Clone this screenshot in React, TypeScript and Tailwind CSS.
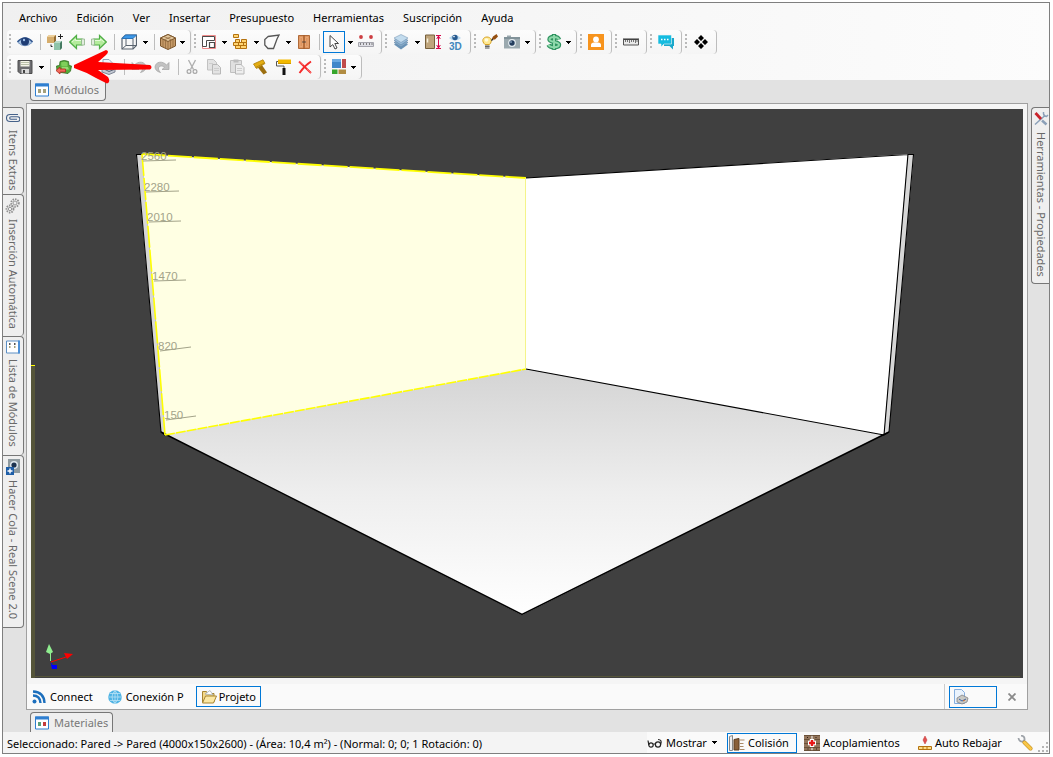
import React from "react";

type IconProps = { children: React.ReactNode; className?: string; box?: string };

function Icon({ children, className = "size-4", box = "0 0 16 16" }: IconProps) {
  return (
    <svg viewBox={box} className={`${className} shrink-0`} fill="none" aria-hidden="true">
      {children}
    </svg>
  );
}

function Caret() {
  return (
    <svg viewBox="0 0 5 3" className="h-[3px] w-[5px] shrink-0" shapeRendering="crispEdges" aria-hidden="true">
      <path d="M0 0h5v1h-1v1h-1v1h-1v-1h-1v-1h-1z" fill="#000" />
    </svg>
  );
}

/* ---------- toolbar icons ---------- */

const EyeIcon = () => (
  <Icon>
    <path d="M0 8Q8 -1 16 8Q8 16 0 8Z" fill="#a9c4e2" />
    <path d="M0.5 8Q8 0 15.5 8" stroke="#33578f" strokeWidth="1.6" />
    <path d="M1 8.500Q8 15 15 8.500" stroke="#7f9cc4" />
    <circle cx="8" cy="7.500" r="4" fill="#1e3c74" />
    <circle cx="7" cy="6" r="1.200" fill="#9fc0ea" />
  </Icon>
);
const BoxesIcon = () => (
  <Icon>
    <path d="M0 3l2-2h7v6l-2 2H0z" fill="#d6ad6c" />
    <path d="M0 3l2-2h7L7 3z" fill="#edd09c" />
    <path d="M7 3l2-2v6l-2 2z" fill="#936b32" />
    <path d="M7 9l2-2h6v7l-2 2H7z" fill="#8fc4aa" />
    <path d="M7 9l2-2h6l-2 2z" fill="#b9dccb" />
    <path d="M13 9l2-2v7l-2 2z" fill="#457a62" />
    <path d="M13.500 0v5M11 2.500h5M4 10.500v2h1.500" stroke="#222" />
  </Icon>
);
const ArrowGreen = ({ flip = false }: { flip?: boolean }) => (
  <Icon>
    <g transform={flip ? "matrix(-1 0 0 1 16 0)" : undefined}>
      <path d="M.7 8L7.500 1.500V5H13v6H7.500v3.500z" fill="#b4ec9c" stroke="#4fae45" strokeWidth="1.200" />
      <path d="M3 8l3.500-3v1.500H12" stroke="#e4fbd9" />
      <path d="M12.500 5h3v6h-3z" fill="#e3ecdf" stroke="#8fb58a" strokeWidth=".8" />
    </g>
  </Icon>
);
const IsoBoxIcon = () => (
  <Icon>
    <path d="M1 4.500L4.500 1H15.500V11.500L12 15H1z" fill="#f7f7f7" stroke="#59636e" strokeWidth="1.200" />
    <path d="M1 4.500L4.500 1H15.500L12 4.500z" fill="#3c98e8" stroke="#2a75bd" />
    <path d="M12 4.500V15M5 4.500V11.500H15M5 11.500L1 15" stroke="#59636e" />
  </Icon>
);
const CrateIcon = () => (
  <Icon>
    <path d="M0.500 4L8 0.500L15.500 4V12L8 15.500L0.500 12z" fill="#c69a68" stroke="#7c572e" />
    <path d="M0.500 4L8 0.500L15.500 4L8 7.500z" fill="#e4c89e" stroke="#7c572e" />
    <path d="M8 7.500V15.500M3 5.500v7.500M5.500 6.500v8M10.500 6.500v8M13 5.500v7.500M4 2.500l7.500 3.300M11.500 2.500L4 6" stroke="#8b6438" strokeWidth=".7" />
  </Icon>
);
const WallIcon = () => (
  <Icon>
    <path d="M1.500 1.500H14.500V14.500H1.500z" fill="#fff" stroke="#f08a8a" />
    <path d="M1.500 12.500V2.500H13.500V6.500H5.500V12.500z" stroke="#4a4a4a" />
    <path d="M8.500 8.500h5v5h-5z" stroke="#4a4a4a" strokeWidth="1.200" />
  </Icon>
);
const BricksIcon = () => (
  <Icon>
    <path d="M1.500 .5h5v3h-5zM3.500 5.500h4v3h-4zM9.500 5.500h5v3h-5zM1.500 8.500h5v3h-5zM6.500 8.500h5v3h-5zM11.500 8.500h3v3h-3zM3.500 11.500h5v3h-5zM8.500 11.500h6v3h-6z" fill="#ffd573" stroke="#b4720f" />
  </Icon>
);
const ShapeIcon = () => (
  <Icon>
    <path d="M4 2.500L15 1L13 5L9.500 14.500H4L.8 11V5.500z" fill="#fbfbfb" stroke="#555" strokeWidth="1.300" />
  </Icon>
);
const CabinetIcon = () => (
  <Icon>
    <path d="M2.500 1.500h11v13h-11z" fill="#dd9560" stroke="#b06a38" />
    <path d="M8 1.500v13" stroke="#914917" />
    <path d="M4 3.500h2.500v9H4zM9.500 3.500H12v9H9.500z" stroke="#ecae7d" strokeWidth=".7" />
    <path d="M6.500 8h1M8.500 8h1" stroke="#333" strokeWidth="1.500" />
  </Icon>
);
const PointerIcon = () => (
  <Icon>
    <path d="M4 1.500L12.500 9.500H8.800L11 14L9 15L6.800 10.600L4 13z" fill="#fff" stroke="#444" />
  </Icon>
);
const MeasureIcon = () => (
  <Icon>
    <circle cx="3" cy="3" r="1.900" fill="#cd3e42" />
    <circle cx="13" cy="3" r="1.900" fill="#cd3e42" />
    <path d="M.5 8.500h15v4H.5z" fill="#dedee4" stroke="#a5a5ad" />
    <path d="M2.500 9v2M5.500 9v2M8.500 9v2M11.500 9v2M14 9v2" stroke="#666" strokeWidth=".8" />
  </Icon>
);
const LayersIcon = () => (
  <Icon>
    <path d="M1 10.500L8 7l7 3.500L8 15.500z" fill="#6b94b8" />
    <path d="M1 8.500L8 5l7 3.500L8 13z" fill="#86abc9" stroke="#6587a8" strokeWidth=".6" />
    <path d="M1 6.300L8 3l7 3.300L8 11z" fill="#98bbd8" stroke="#6587a8" strokeWidth=".6" />
    <path d="M1 4L8 .5L15 4L8 8.500z" fill="#c3dcee" stroke="#7c9bb9" strokeWidth=".6" />
  </Icon>
);
const DoorIcon = () => (
  <Icon>
    <path d="M.5 1h9v13.500h-9z" fill="#bfa57c" stroke="#77603c" />
    <path d="M2.500 4.500v4" stroke="#f6f0df" strokeWidth="1.500" />
    <path d="M11 1.500h5M11 14.500h5M13.500 2v12M11.700 5l1.800-3 1.800 3M11.700 11l1.800 3 1.800-3" stroke="#d9084c" />
  </Icon>
);
const Eye3DIcon = () => (
  <Icon>
    <path d="M2 4Q8 -2 14 4Q8 9 2 4Z" fill="#b9d8ef" />
    <circle cx="8" cy="3.500" r="2.700" fill="#26598f" />
    <circle cx="7" cy="2.600" r=".8" fill="#fff" />
    <text x="2" y="15.500" fontFamily="Liberation Sans, sans-serif" fontSize="10" fontWeight="700" fill="#4187bd">3D</text>
  </Icon>
);
const BulbIcon = () => (
  <Icon>
    <path d="M3 10.500C-1 7 1 3 5 3s6 4 2.500 7.500z" fill="#ffe890" stroke="#d7a224" />
    <circle cx="4.500" cy="6" r="1.800" fill="#fffce0" />
    <path d="M3 11h4.500v4H3z" fill="#a3a3a3" />
    <path d="M3 12.500h4.500" stroke="#666" />
    <path d="M9.500 5.500L11 2.500L14.500 0L16 2.500L13 5.500z" fill="#965011" />
    <path d="M9 7l1-2.500L11.500 6z" fill="#222" />
  </Icon>
);
const CameraIcon = () => (
  <Icon>
    <path d="M0 3h3V1.500h4V3h9v11.500H0z" fill="#9ba9af" />
    <path d="M0 3h16v2H0z" fill="#819299" />
    <circle cx="8" cy="9" r="3.900" fill="#e6eef2" />
    <circle cx="8" cy="9" r="2.700" fill="#243d5d" />
    <circle cx="7" cy="8" r=".8" fill="#b8d4ec" />
  </Icon>
);
const DollarIcon = () => (
  <Icon>
    <path d="M13 5.500C12 2 3.500 2 3.500 5.500C3.500 8.500 13 7.500 13 10.800C13 14 4 14 2.500 10.800M8 0v16" stroke="#2f9460" strokeWidth="4.400" />
    <path d="M13 5.500C12 2 3.500 2 3.500 5.500C3.500 8.500 13 7.500 13 10.800C13 14 4 14 2.500 10.800M8 1v14" stroke="#8fd9ab" strokeWidth="2" />
  </Icon>
);
const PersonIcon = () => (
  <Icon>
    <path d="M0 0h16v16H0z" fill="#f7941e" />
    <circle cx="8" cy="5.500" r="2.900" fill="#fff" />
    <path d="M3 13V11Q3 8.500 6 8.500h4Q13 8.500 13 11v2z" fill="#fff" />
  </Icon>
);
const RulerIcon = () => (
  <Icon>
    <path d="M.5 5.500h15v5.500H.5z" fill="#e9e9e9" stroke="#555" />
    <path d="M0 5h16" stroke="#333" />
    <path d="M2.500 6v2M4.500 6v2M6.500 6v3M8.500 6v2M10.500 6v2M12.500 6v3M14 6v2" stroke="#555" strokeWidth=".8" />
  </Icon>
);
const ChatIcon = () => (
  <Icon>
    <path d="M6 4h10v8h-1v3.500L11.500 12H6z" fill="#1aa8cb" />
    <path d="M0 1h13.500v9H6l-3 3v-3H0z" fill="#15bce0" stroke="#f7f7f7" strokeWidth=".6" />
    <path d="M3 5.500h1.500M6 5.500h1.500M9 5.500h1.500" stroke="#fff" strokeWidth="1.500" />
  </Icon>
);
const DiamondsIcon = () => (
  <Icon>
    <path d="M8 1l3 3-3 3-3-3zM8 9l3 3-3 3-3-3zM4 5l3 3-3 3-3-3zM12 5l3 3-3 3-3-3z" fill="#000" />
  </Icon>
);
const SaveIcon = () => (
  <Icon>
    <path d="M1 1.500h14v13H3l-2-2z" fill="#6d6d70" stroke="#4c4c4c" />
    <path d="M3.500 2h9v5.500h-9z" fill="#f4f4e8" />
    <path d="M4 3.500h8M4 5.500h8" stroke="#b9bfa8" />
    <path d="M4.500 10h7.500v4.500H4.500z" fill="#d9d9d9" />
    <path d="M6 11h2v3H6z" fill="#444" />
  </Icon>
);
const SofaIcon = () => (
  <Icon>
    <path d="M3.500 6.500L4 2.500Q8 .5 12.500 2.500L13 6.500L15.500 7L14.500 12L12 14.500L5 13.500L1 11.500L.5 7z" fill="#55aa38" stroke="#2f6f20" strokeWidth=".8" />
    <path d="M5 3.500Q8 2 11.500 3.500v4H5.500z" fill="#7fcf5a" />
    <path d="M5.500 8h6.500l1 2.500H6.500z" fill="#94dc70" />
    <path d="M0 11.500L4 8v2h5.500v3H4v2z" fill="#f2695a" stroke="#ae2a20" strokeWidth=".8" />
  </Icon>
);
const BrownToolIcon = () => (
  <Icon>
    <path d="M4 3l7 2 2 7-5 1-4-3z" fill="#b28b86" />
  </Icon>
);
const PrinterIcon = () => (
  <Icon>
    <path d="M3 .5h6l3 3v4H3z" fill="#eef4fb" stroke="#93a8bf" />
    <path d="M2 9l10-2 3 3v3l-6 2.500L2 13z" fill="#c3c9d3" stroke="#7c8493" />
    <path d="M5 10.500l4 2 5-2" stroke="#596274" />
  </Icon>
);
const ArcIcon = ({ flip = false }: { flip?: boolean }) => (
  <Icon>
    <g transform={flip ? "matrix(-1 0 0 1 16 0)" : undefined}>
      <path d="M1 3.500v7h7L5.500 8.300C8 6 12 7 11.500 10c-.2 1.500-1 2.500-2 3.500 3.500-.8 5.500-3 5.500-5.500C14.500 2.500 7.500 1.500 3.500 6z" fill="#c2c2c2" stroke="#a2a2a2" strokeWidth=".7" />
    </g>
  </Icon>
);
const CutIcon = () => (
  <Icon>
    <path d="M4.500 1l5 9.500M11.500 1l-5 9.500" stroke="#b0b0b0" strokeWidth="1.400" />
    <circle cx="5" cy="12.500" r="1.900" stroke="#a6a6a6" strokeWidth="1.200" />
    <circle cx="11" cy="12.500" r="1.900" stroke="#a6a6a6" strokeWidth="1.200" />
  </Icon>
);
const CopyIcon = () => (
  <Icon>
    <path d="M1.500 .5h6l3 3v7.500h-9z" fill="#e3e3e3" stroke="#c2c2c2" />
    <path d="M6.500 5.500h5l3 3v6.500h-8z" fill="#e3e3e3" stroke="#b8b8b8" />
    <path d="M8 9.500h5M8 11.500h5M3 4.500h4" stroke="#cecece" />
  </Icon>
);
const PasteIcon = () => (
  <Icon>
    <path d="M1.500 1.500h11v12h-11z" fill="#e0e0e0" stroke="#c0c0c0" />
    <path d="M4.500 .5h5v3h-5z" fill="#bdbdbd" />
    <path d="M6.500 5.500h5.500l3 3v6.500H6.500z" fill="#eee" stroke="#b8b8b8" />
    <path d="M8 9.500h5M8 11.500h5" stroke="#cecece" />
  </Icon>
);
const HammerIcon = () => (
  <Icon>
    <path d="M5.500 8L9.500 5.500L15 13.500L11.500 15.500z" fill="#9c6f10" />
    <path d="M1.500 5L11 .8L13 4.500L4.500 9.500z" fill="#e3ad12" stroke="#b28008" strokeWidth=".8" />
    <path d="M3.500 8.500L12.500 4" stroke="#b98a10" />
  </Icon>
);
const RollerIcon = () => (
  <Icon>
    <path d="M3 .5h13v4.500H3z" fill="#f2b900" />
    <path d="M3 4h13v1H3z" fill="#d09a00" />
    <path d="M3 2.500H1.500V7H9v3" stroke="#555" />
    <path d="M7.500 9h3v7h-3z" fill="#111" />
  </Icon>
);
const DeleteIcon = () => (
  <Icon>
    <path d="M2 2.500L14 14M14 2.500Q7 7 2.500 14" stroke="#f52a2a" strokeWidth="1.800" />
    <path d="M2 2.500L6 6M10 10l4 4" stroke="#ff8a8a" strokeWidth=".6" />
  </Icon>
);
const TilesIcon = () => (
  <Icon>
    <path d="M1 0h9v9H1z" fill="#3f87ca" />
    <path d="M1 0h9v3H1z" fill="#69a9e2" />
    <path d="M11 0h4v9h-4z" fill="#c04b4b" />
    <path d="M1 10.500h5.500V15H1z" fill="#36a52b" />
    <path d="M7.500 10.500H15V15H7.500z" fill="#b18c42" />
  </Icon>
);

/* ---------- toolbar parts ---------- */

function ToolGroup({ children, label }: { children: React.ReactNode; label: string }) {
  return (
    <div
      role="toolbar"
      aria-label={label}
      className="flex h-6 items-center rounded-sm border-r border-[#bdbdbd] bg-gradient-to-b from-[#fcfcfc] to-[#f5f5f5] pr-1"
    >
      <svg viewBox="0 0 7 16" className="h-4 w-[7px]" shapeRendering="crispEdges" aria-hidden="true">
        <path d="M2 0h2v2H2zM2 4h2v2H2zM2 8h2v2H2zM2 12h2v2H2z" fill="#b9b9b9" />
      </svg>
      {children}
    </div>
  );
}

function Tool({ label, children, width = "w-[22px]", active = false }: { label: string; children: React.ReactNode; width?: string; active?: boolean }) {
  return (
    <button
      type="button"
      aria-label={label}
      aria-pressed={active || undefined}
      className={`flex h-[22px] ${width} items-center justify-center ${active ? "border border-[#0078d7]" : ""}`}
    >
      {children}
    </button>
  );
}

function Drop({ label, width = "w-[10px]" }: { label: string; width?: string }) {
  return (
    <button type="button" aria-label={label} className={`flex h-[22px] ${width} items-center justify-center`}>
      <Caret />
    </button>
  );
}

function Separator() {
  return (
    <div className="flex w-2 justify-center">
      <div className="h-4 w-px bg-[#bdbdbd]" />
    </div>
  );
}

function WindowIcon({ a, b }: { a: string; b: string }) {
  return (
    <Icon className="h-[14px] w-[14px]" box="0 0 14 14">
      <path d="M.5 1h13v12H.5z" fill="#fff" stroke="#2f7fd0" />
      <path d="M0 .5h14v3H0z" fill="#2f7fd0" />
      <path d="M3 6h3v4H3z" fill={a} />
      <path d="M8 6h3v4H8z" fill={b} />
    </Icon>
  );
}

/* ---------- side tabs ---------- */

const ClipIcon = () => (
  <Icon className="size-[14px]" box="0 0 14 14">
    <path d="M12 3.500H4a3.300 3.300 0 0 0 0 7h7.500a2.300 2.300 0 0 0 0-4.800H5a1.300 1.300 0 0 0 0 2.600h6" stroke="#46628a" strokeWidth="1.100" />
  </Icon>
);
const GearsIcon = () => (
  <Icon>
    <circle cx="10" cy="5" r="3.800" stroke="#8f8f8f" strokeWidth="1.800" strokeDasharray="1.500 1" />
    <circle cx="10" cy="5" r="2" stroke="#999" />
    <circle cx="5" cy="11" r="3.500" stroke="#8f8f8f" strokeWidth="1.800" strokeDasharray="1.500 1" />
    <circle cx="5" cy="11" r="1.700" stroke="#999" />
  </Icon>
);
const ModuleListIcon = () => (
  <Icon className="size-[14px]" box="0 0 14 14">
    <path d="M.5 1h13v12H.5z" fill="#fff" stroke="#5c8fc4" />
    <path d="M12 .5h2v13h-2z" fill="#4c8fd6" />
    <path d="M3 3h1.500v2H3zM8 3h1.500v2H8z" fill="#555" />
    <path d="M3 6h1.500v2H3zM8 6h1.500v2H8z" fill="#a5a17c" />
  </Icon>
);
const CameraPlusIcon = () => (
  <Icon>
    <path d="M3 0h12v14H3z" fill="#8f9ba0" />
    <circle cx="9" cy="6" r="4" fill="#dfe8ee" />
    <circle cx="9" cy="6" r="2.600" fill="#1d3450" />
    <path d="M1 8h8v8H1z" fill="#1f5fa8" />
    <path d="M5 9.500v5M2.500 12h5" stroke="#fff" strokeWidth="1.400" />
  </Icon>
);
const ToolsIcon = () => (
  <Icon>
    <path d="M2 13.500L12 4.500M10.500 1Q10 5 13.500 5.500L15 4" stroke="#8ba0b8" strokeWidth="1.500" />
    <path d="M9 9.500l4.500 4" stroke="#8ba0b8" strokeWidth="2.500" />
    <path d="M2.500 2l5.500 6" stroke="#c9232b" strokeWidth="2.800" />
  </Icon>
);

function SideTab({ label, icon, size, right = false }: { label: string; icon: React.ReactNode; size: string; right?: boolean }) {
  return (
    <button
      type="button"
      className={`flex ${size} flex-col items-center gap-[5px] border-[#777] bg-[#efefef] pt-[3px] text-[#686868] ${
        right ? "w-[18px] rounded-l border-y border-l" : "w-[21px] rounded-r border-t border-r last:border-b"
      }`}
    >
      {icon}
      <span className="whitespace-nowrap leading-4 [writing-mode:vertical-rl]">{label}</span>
    </button>
  );
}

/* ---------- 3D view ---------- */

const marks = [
  { label: "2560", x: 141, y: 160, x2: 176 },
  { label: "2280", x: 144, y: 191, x2: 179 },
  { label: "2010", x: 147, y: 221, x2: 181 },
  { label: "1470", x: 152, y: 280, x2: 186 },
  { label: "820", x: 158, y: 350, x2: 191 },
  { label: "150", x: 164, y: 419, x2: 196 },
];

function Scene() {
  return (
    <svg viewBox="31 109 992 569" className="h-full w-full" preserveAspectRatio="xMidYMid meet" fill="none" role="img" aria-label="Vista 3D">
      <defs>
        <linearGradient id="floor" x1="0" y1="369" x2="0" y2="615" gradientUnits="userSpaceOnUse">
          <stop offset="0" stopColor="#d4d4d4" />
          <stop offset=".5" stopColor="#eeeeee" />
          <stop offset="1" stopColor="#ffffff" />
        </linearGradient>
      </defs>
      <path d="M31 365h4v313h-4z" fill="#55553a" />
      <path d="M31 365h4v1h-4z" fill="#ffff00" />
      <path d="M31 676.500h989" stroke="#55553a" />

      <path d="M161 432L526 369L889 432L522 615z" fill="url(#floor)" />
      <path d="M136 154L142 154L165 435L161 432z" fill="#d6d6d6" />
      <path d="M142 154L526 178V369L165 435z" fill="#ffffe3" />
      <path d="M526 178L908 154L884 435L526 369z" fill="#fff" />
      <path d="M908 154H914L889 432L884 435z" fill="#d6d6d6" />

      <g stroke="#000" strokeWidth="1.100">
        <path d="M142 154.500H136.500L161 432L165 435" />
        <path d="M526 178L908 154.500H913.500L889 432L884 435L908 154M884 435L526 369" />
        <path d="M161 432L522 614.500L889 432" strokeWidth="1.500" />
      </g>
      <path d="M142 154L165 435" stroke="#ff0" strokeWidth="1.600" strokeDasharray="22 2" />
      <path d="M142 154L526 178" stroke="#ff0" strokeWidth="1.800" strokeDasharray="24 2" />
      <path d="M165 435L526 369" stroke="#ff0" strokeWidth="1.600" strokeDasharray="10 1" />
      <path d="M525.500 178V369" stroke="#f4f48a" />

      {marks.map((m) => (
        <g key={m.label}>
          <text x={m.x} y={m.y} fontFamily="Liberation Sans, sans-serif" fontSize="11.500" fill="#a3a389">
            {m.label}
          </text>
          <path d={`M${m.x + 2} ${m.y + 1}L${m.x2} ${m.y < 340 ? m.y : m.y - 3}`} stroke="#a3a389" />
        </g>
      ))}

      <path d="M50.500 661V651" stroke="#8fee8f" />
      <path d="M46 652l3-8 4 8-3 2z" fill="#8fee8f" />
      <path d="M51 662L66 657" stroke="#f00" />
      <path d="M64 653l9 1-6 5z" fill="#f00" />
      <path d="M51 663l2 3" stroke="#00f" />
      <path d="M51 665h6v4h-5z" fill="#00f" />
    </svg>
  );
}

/* ---------- status and document bars ---------- */

const FeedIcon = () => (
  <Icon className="size-[14px]" box="0 0 14 14">
    <circle cx="2.500" cy="11.500" r="2" fill="#1c6fbd" />
    <path d="M1 5.500Q8 5.500 8.500 13M1 1.500Q12 2 12.500 13" stroke="#1c6fbd" strokeWidth="2.400" />
  </Icon>
);
const GlobeIcon = () => (
  <Icon className="size-[14px]" box="0 0 14 14">
    <circle cx="7" cy="7" r="6.800" fill="#4fb3e4" />
    <path d="M.5 7h13M7 .5v13M2 3.500h10M2 10.500h10M7 .5Q1 7 7 13.500Q13 7 7 .5" stroke="#c4e8f8" strokeWidth=".7" />
  </Icon>
);
const FolderIcon = () => (
  <Icon>
    <path d="M1.500 13V2.500h4l1 2H13V13z" fill="#f4d98a" stroke="#a78431" />
    <path d="M4 5l5-3.500L12 6z" fill="#fff" stroke="#9aa3ad" strokeWidth=".7" />
    <path d="M1.500 14L4.500 7h11L12.500 14z" fill="#fbe7a3" stroke="#a78431" />
  </Icon>
);
const PagePrintIcon = () => (
  <Icon>
    <path d="M1.500 .5h7l3 3v11h-10z" fill="#eaf3fd" stroke="#85aede" />
    <path d="M4 9l5-3 6 3-1 4-5 2-5-2z" fill="#c9c9c4" stroke="#75757a" strokeWidth=".7" />
    <path d="M6 10l3 2 4-2" stroke="#3b64a8" />
    <path d="M10 12l2-1" stroke="#d8702a" />
  </Icon>
);
const GlassesIcon = () => (
  <Icon>
    <circle cx="4" cy="10" r="2.200" stroke="#222" strokeWidth="1.200" />
    <circle cx="11" cy="9.500" r="2.600" stroke="#222" strokeWidth="1.200" />
    <path d="M1.800 10L1 5.500M6.300 9h2M13.600 9.500Q15.500 4.500 11 4.500" stroke="#222" strokeWidth="1.200" />
  </Icon>
);
const CollisionIcon = () => (
  <Icon>
    <path d="M.5 1.500L3.500 .5v15h-3z" fill="#eee" stroke="#888" />
    <path d="M5 4.500L10 3.500v11.500H5z" fill="#8a6039" stroke="#5c3f22" />
    <path d="M11 5h4.500M11 8.500h3.500M11 11.500h3.500M11 14.500h4.500" stroke="#a98a68" strokeWidth="1.200" />
  </Icon>
);
const CouplingIcon = () => (
  <Icon>
    <path d="M0 0h7.500v16H0zM8.500 0H16v16H8.500z" fill="#92745a" />
    <path d="M0 .5h16M0 4.500h16M0 8.500h16M0 12.500h16M0 15.500h16" stroke="#604630" strokeWidth=".8" />
    <path d="M3.500 2v1M3.500 14h1M12 2v1M12 14h1" stroke="#2d1f13" />
    <path d="M8 4v8M4 8h8" stroke="#fff" strokeWidth="4.400" />
    <path d="M8 5v6M5 8h6" stroke="#e81717" strokeWidth="2.400" />
  </Icon>
);
const LowerIcon = () => (
  <Icon className="size-[14px]" box="0 0 14 14">
    <path d="M7 0l2 4L7 8L5 4z" fill="#e05252" stroke="#c33030" strokeWidth=".5" />
    <path d="M.5 10.500h13v3H.5z" fill="#fbdc86" stroke="#b4720f" />
    <path d="M5 10.500v3M9 10.500v3" stroke="#b4720f" />
  </Icon>
);
const WrenchIcon = () => (
  <Icon>
    <path d="M1.500 3Q2 7 6 6.500L7.500 5Q8 1 4 .7" stroke="#9da2a8" strokeWidth="1.800" />
    <path d="M7.500 7.500l6 6" stroke="#c08c1c" strokeWidth="4" strokeLinecap="round" />
    <path d="M7.500 7.500l6 6" stroke="#f8c648" strokeWidth="3" strokeLinecap="round" />
  </Icon>
);

const menus = ["Archivo", "Edición", "Ver", "Insertar", "Presupuesto", "Herramientas", "Suscripción", "Ayuda"];

export default function App() {
  return (
    <div className="h-screen bg-white pt-0.5 pr-[3px] pb-[3px] pl-0.5 font-['Noto_Sans','Open_Sans',sans-serif] text-[11px] leading-4 text-black">
      <div className="flex h-full flex-col border border-[#7f7f7f] bg-[#e2e2e2]">
        <header className="relative bg-gradient-to-r from-[#f0f0f0] to-[#fcfcfc]">
          <nav className="flex h-[27px] items-center gap-[19px] pt-[3px] pl-4" aria-label="Menú principal">
            {menus.map((m) => (
              <button key={m} type="button">{m}</button>
            ))}
          </nav>

          <div className="flex h-[25px] items-start gap-px pl-1">
            <ToolGroup label="Vistas">
              <Tool label="Visualizar"><EyeIcon /></Tool>
              <Separator />
              <Tool label="Módulos"><BoxesIcon /></Tool>
              <Tool label="Anterior"><ArrowGreen /></Tool>
              <Tool label="Siguiente"><ArrowGreen flip /></Tool>
              <Separator />
              <Tool label="Perspectiva"><IsoBoxIcon /></Tool>
              <Drop label="Opciones de perspectiva" />
              <Separator />
              <Tool label="Textura" width="w-5"><CrateIcon /></Tool>
              <Drop label="Opciones de textura" width="w-2" />
            </ToolGroup>
            <ToolGroup label="Construcción">
              <Tool label="Paredes" width="w-5"><WallIcon /></Tool>
              <Drop label="Opciones de paredes" />
              <Tool label="Ladrillos"><BricksIcon /></Tool>
              <Drop label="Opciones de ladrillos" />
              <Tool label="Forma"><ShapeIcon /></Tool>
              <Drop label="Opciones de forma" />
              <Tool label="Armario"><CabinetIcon /></Tool>
              <Separator />
              <Tool label="Seleccionar" active><PointerIcon /></Tool>
              <Drop label="Opciones de selección" />
              <Tool label="Cotas"><MeasureIcon /></Tool>
            </ToolGroup>
            <ToolGroup label="Capas">
              <Tool label="Capas"><LayersIcon /></Tool>
              <Drop label="Opciones de capas" />
              <Tool label="Altura de puerta"><DoorIcon /></Tool>
              <Tool label="Vista 3D"><Eye3DIcon /></Tool>
            </ToolGroup>
            <ToolGroup label="Render">
              <Tool label="Iluminación"><BulbIcon /></Tool>
              <Tool label="Cámara"><CameraIcon /></Tool>
              <Drop label="Opciones de cámara" width="w-2" />
            </ToolGroup>
            <ToolGroup label="Precios">
              <Tool label="Presupuesto" width="w-5"><DollarIcon /></Tool>
              <Drop label="Opciones de presupuesto" width="w-2" />
            </ToolGroup>
            <ToolGroup label="Cliente"><Tool label="Cliente"><PersonIcon /></Tool></ToolGroup>
            <ToolGroup label="Medir"><Tool label="Regla"><RulerIcon /></Tool></ToolGroup>
            <ToolGroup label="Mensajes"><Tool label="Mensajes"><ChatIcon /></Tool></ToolGroup>
            <ToolGroup label="Complementos"><Tool label="Complementos"><DiamondsIcon /></Tool></ToolGroup>
          </div>

          <div className="flex h-[25px] items-start gap-px pl-1">
            <ToolGroup label="Edición">
              <Tool label="Guardar"><SaveIcon /></Tool>
              <Drop label="Opciones de guardar" />
              <Separator />
              <Tool label="Importar ambiente" width="w-5"><SofaIcon /></Tool>
              <Tool label="Exportar"><BrownToolIcon /></Tool>
              <Tool label="Imprimir" width="w-6"><PrinterIcon /></Tool>
              <Separator />
              <Tool label="Deshacer"><ArcIcon /></Tool>
              <Tool label="Rehacer" width="w-6"><ArcIcon flip /></Tool>
              <Separator />
              <Tool label="Cortar" width="w-5"><CutIcon /></Tool>
              <Tool label="Copiar" width="w-6"><CopyIcon /></Tool>
              <Tool label="Pegar"><PasteIcon /></Tool>
              <Tool label="Herraje" width="w-6"><HammerIcon /></Tool>
              <Tool label="Pintar"><RollerIcon /></Tool>
              <Tool label="Eliminar"><DeleteIcon /></Tool>
            </ToolGroup>
            <ToolGroup label="Disposición">
              <Tool label="Paneles" width="w-5"><TilesIcon /></Tool>
              <Drop label="Opciones de paneles" width="w-2" />
            </ToolGroup>
          </div>

          <svg viewBox="0 0 80 38" className="pointer-events-none absolute top-[43px] left-[71px] h-[38px] w-20" aria-hidden="true">
            <path d="M0 19L32 4Q36 5 32 9L24 16L76 19Q79 21 76 23.500L24 24L34 31Q37 36 33 37.500L22 32Q12 26 0 22Q-1 20 0 19Z" fill="#fe0000" />
          </svg>
        </header>

        <main className="flex min-h-0 flex-1 flex-col">
          <div className="flex h-[23px] items-start pl-[27px]">
            <button type="button" className="flex h-[21px] items-center gap-[5px] rounded-b border-x border-b border-[#777] bg-[#efefef] pr-1.5 pl-1 text-[#787878]">
              <WindowIcon a="#a5a17c" b="#a5a17c" />
              Módulos
            </button>
          </div>

          <div className="flex min-h-0 flex-1">
            <aside className="flex w-[23px] flex-col items-start pt-1">
              <SideTab label="Itens Extras" icon={<ClipIcon />} size="h-[87px]" />
              <SideTab label="Inserción Automática" icon={<GearsIcon />} size="h-[142px]" />
              <SideTab label="Lista de Módulos" icon={<ModuleListIcon />} size="h-[119px]" />
              <SideTab label="Hacer Cola - Real Scene 2.0" icon={<CameraPlusIcon />} size="h-[173px]" />
            </aside>

            <section className="flex min-w-0 flex-1 flex-col border border-[#a0a0a0] bg-[#f5f5f5]">
              <div className="mx-1 mt-[5px] min-h-0 flex-1 bg-[#404040]">
                <Scene />
              </div>
              <div className="mt-1.5 flex h-[25px] items-center justify-between bg-[#fafafa] pl-[3px]">
                <div className="flex items-center gap-[11px]">
                  <button type="button" className="flex h-[22px] items-center gap-1 px-0.5"><FeedIcon />Connect</button>
                  <button type="button" className="flex h-[22px] items-center gap-1 px-0.5"><GlobeIcon />Conexión P</button>
                  <button type="button" aria-pressed="true" className="flex h-[21px] items-center gap-0.5 border border-[#0078d7] px-1 -ml-px"><FolderIcon />Projeto</button>
                </div>
                <div className="flex h-full items-center border-l border-[#ccc] pl-1">
                  <button type="button" aria-label="Vista de impresión" className="flex h-[22px] w-12 items-center border border-[#0078d7] pl-[3px]">
                    <PagePrintIcon />
                  </button>
                  <button type="button" aria-label="Cerrar" className="flex h-5 w-[30px] items-center justify-center">
                    <svg viewBox="0 0 8 8" className="size-2" aria-hidden="true"><path d="M.5 .5l7 7M7.500 .5l-7 7" stroke="#8a8a8a" strokeWidth="1.800" /></svg>
                  </button>
                </div>
              </div>
            </section>

            <aside className="flex w-[21px] flex-col items-end pt-1">
              <SideTab label="Herramientas - Propiedades" icon={<ToolsIcon />} size="h-[177px]" right />
            </aside>
          </div>

          <div className="flex h-[22px] items-end pl-[27px]">
            <button type="button" className="flex h-5 items-center gap-[5px] rounded-t border-x border-t border-[#777] bg-[#efefef] px-1 text-[#787878]">
              <WindowIcon a="#57a07a" b="#c43c3c" />
              Materiales
            </button>
          </div>
        </main>

        <footer className="flex h-[21px] items-center justify-between bg-[#f4f4f4] pl-1">
          <span className="whitespace-nowrap pt-0.5">Seleccionado: Pared -&gt; Pared (4000x150x2600) - (Área: 10,4 m²) - (Normal: 0; 0; 1 Rotación: 0)</span>
          <div className="flex h-full items-center bg-[#fafafa]">
            <button type="button" className="flex h-5 w-20 items-center gap-[3px]"><GlassesIcon />Mostrar<span className="ml-0.5"><Caret /></span></button>
            <button type="button" aria-pressed="true" className="flex h-5 w-[70px] items-center gap-[3px] border border-[#0078d7] pl-px"><CollisionIcon />Colisión</button>
            <button type="button" className="ml-[7px] flex h-5 w-[107px] items-center gap-[3px]"><CouplingIcon />Acoplamientos</button>
            <button type="button" className="ml-[7px] flex h-5 w-[92px] items-center gap-[3px]"><LowerIcon />Auto Rebajar</button>
            <button type="button" aria-label="Configuración" className="ml-[7px] flex h-5 w-5 items-center"><WrenchIcon /></button>
            <svg viewBox="0 0 12 12" className="size-3 self-end" shapeRendering="crispEdges" aria-hidden="true">
              <path d="M9 1h2v2H9zM5 5h2v2H5zM9 5h2v2H9zM1 9h2v2H1zM5 9h2v2H5zM9 9h2v2H9z" fill="#b5b5b5" />
            </svg>
          </div>
        </footer>
      </div>
    </div>
  );
}
